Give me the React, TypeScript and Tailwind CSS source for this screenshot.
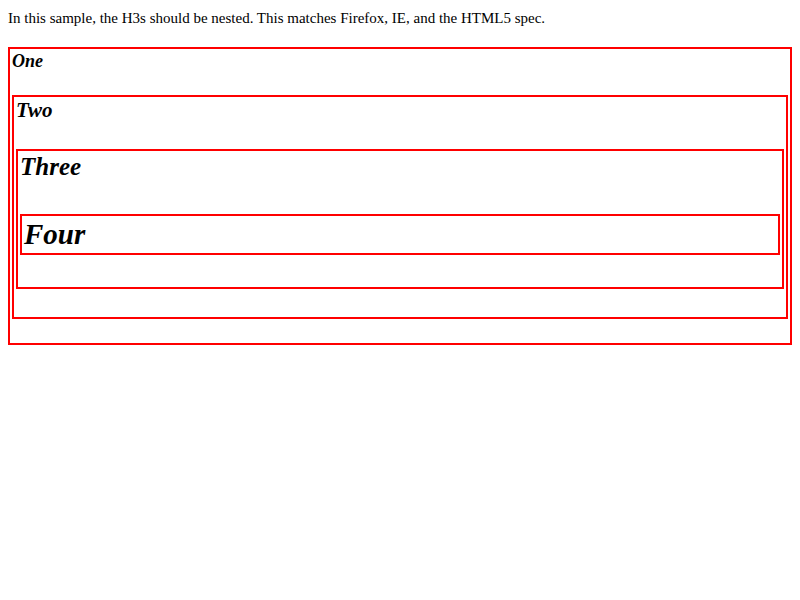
export default function App() {
  return (
    <div className="min-h-[600px] bg-white px-[8px] pt-[10px] text-black font-['Liberation_Serif','Times_New_Roman',serif]">
      <p className="text-[15px] leading-[17px]">
        In this sample, the H3s should be nested. This matches Firefox, IE, and the HTML5 spec.
      </p>

      {/* One */}
      <section className="mt-[20px] border-2 border-[#ff0000] p-[2px] pb-[24px]">
        <h3 className="mb-[24px] text-[18px] leading-[20px] font-bold italic">One</h3>

        {/* Two */}
        <section className="border-2 border-[#ff0000] p-[2px] pb-[28px]">
          <h3 className="mb-[27px] text-[21px] leading-[23px] font-bold italic">Two</h3>

          {/* Three */}
          <section className="border-2 border-[#ff0000] p-[2px] pb-[32px]">
            <h3 className="mb-[33px] text-[25px] leading-[28px] font-bold italic">Three</h3>

            {/* Four */}
            <section className="border-2 border-[#ff0000] p-[2px]">
              <h3 className="text-[29px] leading-[33px] font-bold italic">Four</h3>
            </section>
          </section>
        </section>
      </section>
    </div>
  )
}
